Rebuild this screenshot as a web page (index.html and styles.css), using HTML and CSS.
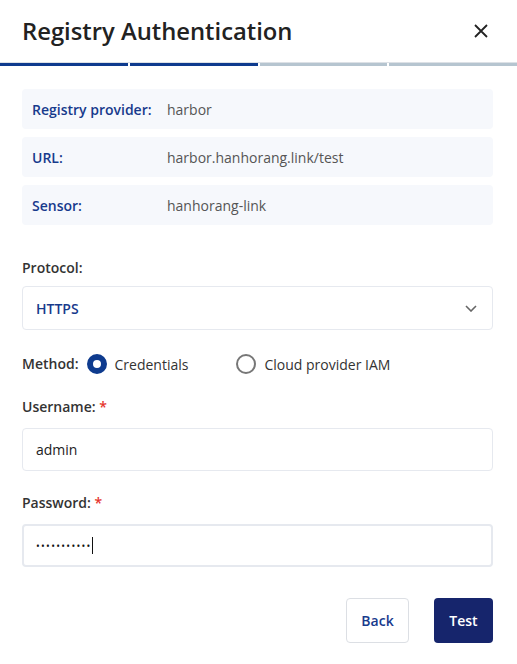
FILE: index.html
```html
<!DOCTYPE html>
<html>
<head>
<meta charset="utf-8">
<link rel="stylesheet" href="styles.css">
</head>
<body>
<div class="modal">
  <header class="header">
    <h1 class="title">Registry Authentication</h1>
    <button class="close" aria-label="Close">
      <svg width="14" height="14" viewBox="0 0 14 14"><path d="M1 1L13 13M13 1L1 13" stroke="#222" stroke-width="1.8" fill="none"/></svg>
    </button>
  </header>
  <div class="progress">
    <span class="seg done"></span><span class="seg done"></span><span class="seg"></span><span class="seg"></span>
  </div>
  <div class="body">
    <div class="info">
      <div class="info-row"><span class="info-label">Registry provider:</span><span class="info-value">harbor</span></div>
      <div class="info-row"><span class="info-label">URL:</span><span class="info-value">harbor.hanhorang.link/test</span></div>
      <div class="info-row"><span class="info-label">Sensor:</span><span class="info-value">hanhorang-link</span></div>
    </div>

    <div class="field protocol">
      <label class="label">Protocol:</label>
      <div class="select">
        <span class="select-value">HTTPS</span>
        <svg width="12" height="7" viewBox="0 0 12 7"><path d="M1 1L6 6L11 1" stroke="#666" stroke-width="1.6" fill="none"/></svg>
      </div>
    </div>

    <div class="method">
      <span class="label">Method:</span>
      <span class="radio checked"></span><span class="radio-text">Credentials</span>
      <span class="radio second"></span><span class="radio-text">Cloud provider IAM</span>
    </div>

    <div class="field user">
      <label class="label">Username: <span class="req">*</span></label>
      <div class="input">admin</div>
    </div>

    <div class="field pass">
      <label class="label">Password: <span class="req">*</span></label>
      <div class="input focus"><span class="dots">•••••••••••</span><span class="caret"></span></div>
    </div>

    <div class="actions">
      <button class="btn back">Back</button>
      <button class="btn test">Test</button>
    </div>
  </div>
</div>
</body>
</html>
```

FILE: styles.css
```css
* { box-sizing: border-box; }
html, body { margin: 0; padding: 0; background: #fff; }
body { font-family: "Open Sans", "Noto Sans", sans-serif; color: #222; width: 517px; height: 664px; overflow: hidden; }

.header { height: 62px; display: flex; align-items: center; justify-content: space-between; padding: 0 29px 0 22px; }
.title { margin: 0; font-size: 23.8px; font-weight: 600; color: #222; letter-spacing: 0; line-height: 1; padding-top: 1px; }
.close { border: 0; background: none; padding: 0; width: 14px; height: 14px; display: flex; }

.progress { display: flex; gap: 2px; border-top: 1px solid #dde1e6; height: 4px; }
.seg { flex: 1; height: 3px; background: #b6c5d0; }
.seg.done { background: #0e3b8e; }

.body { padding: 23px 24px 0 22px; }
.info { display: flex; flex-direction: column; gap: 8px; }
.info-row { height: 40px; background: #f6f8fc; border-radius: 4px; display: flex; align-items: center; padding-left: 10px; font-size: 14px; }
.info-label { width: 135px; font-weight: 600; color: #173a8c; }
.info-value { color: #555; }

.label { font-size: 14px; font-weight: 600; color: #333; line-height: 20px; display: block; }
.req { color: #e5342c; }

.protocol { margin-top: 33px; }
.select { margin-top: 8px; height: 44px; border: 1px solid #e6e9ef; border-radius: 4px; display: flex; align-items: center; justify-content: space-between; padding: 0 15px 0 13px; }
.select-value { font-size: 14px; font-weight: 600; color: #173a8c; }

.method { margin-top: 24px; display: flex; align-items: center; height: 20px; font-size: 14px; }
.method .label { margin-right: 8px; }
.radio { width: 20px; height: 20px; border-radius: 50%; border: 2px solid #777; flex: none; }
.radio.checked { border: 6px solid #0e3b8e; background: #fff; }
.radio.second { margin-left: 48px; }
.radio-text { margin-left: 8px; color: #333; }

.user { margin-top: 23px; }
.pass { margin-top: 22px; }
.input { margin-top: 11px; height: 43px; border: 1px solid #e6e9ef; border-radius: 4px; display: flex; align-items: center; padding-left: 13px; font-size: 14px; color: #222; }
.input.focus { border: 2px solid #e6e9ef; padding-left: 12px; }
.dots { font-size: 10px; letter-spacing: 1.3px; color: #111; }
.caret { width: 1px; height: 17px; background: #111; margin-left: 0; }

.actions { margin-top: 31px; display: flex; justify-content: flex-end; gap: 25px; }
.btn { height: 45px; border-radius: 4px; font-family: inherit; font-size: 14px; font-weight: 600; padding: 0; }
.back { width: 63px; background: #fff; border: 1px solid #dcdfe4; color: #173a8c; }
.test { width: 59px; background: #16256c; border: 0; color: #fff; }
```
